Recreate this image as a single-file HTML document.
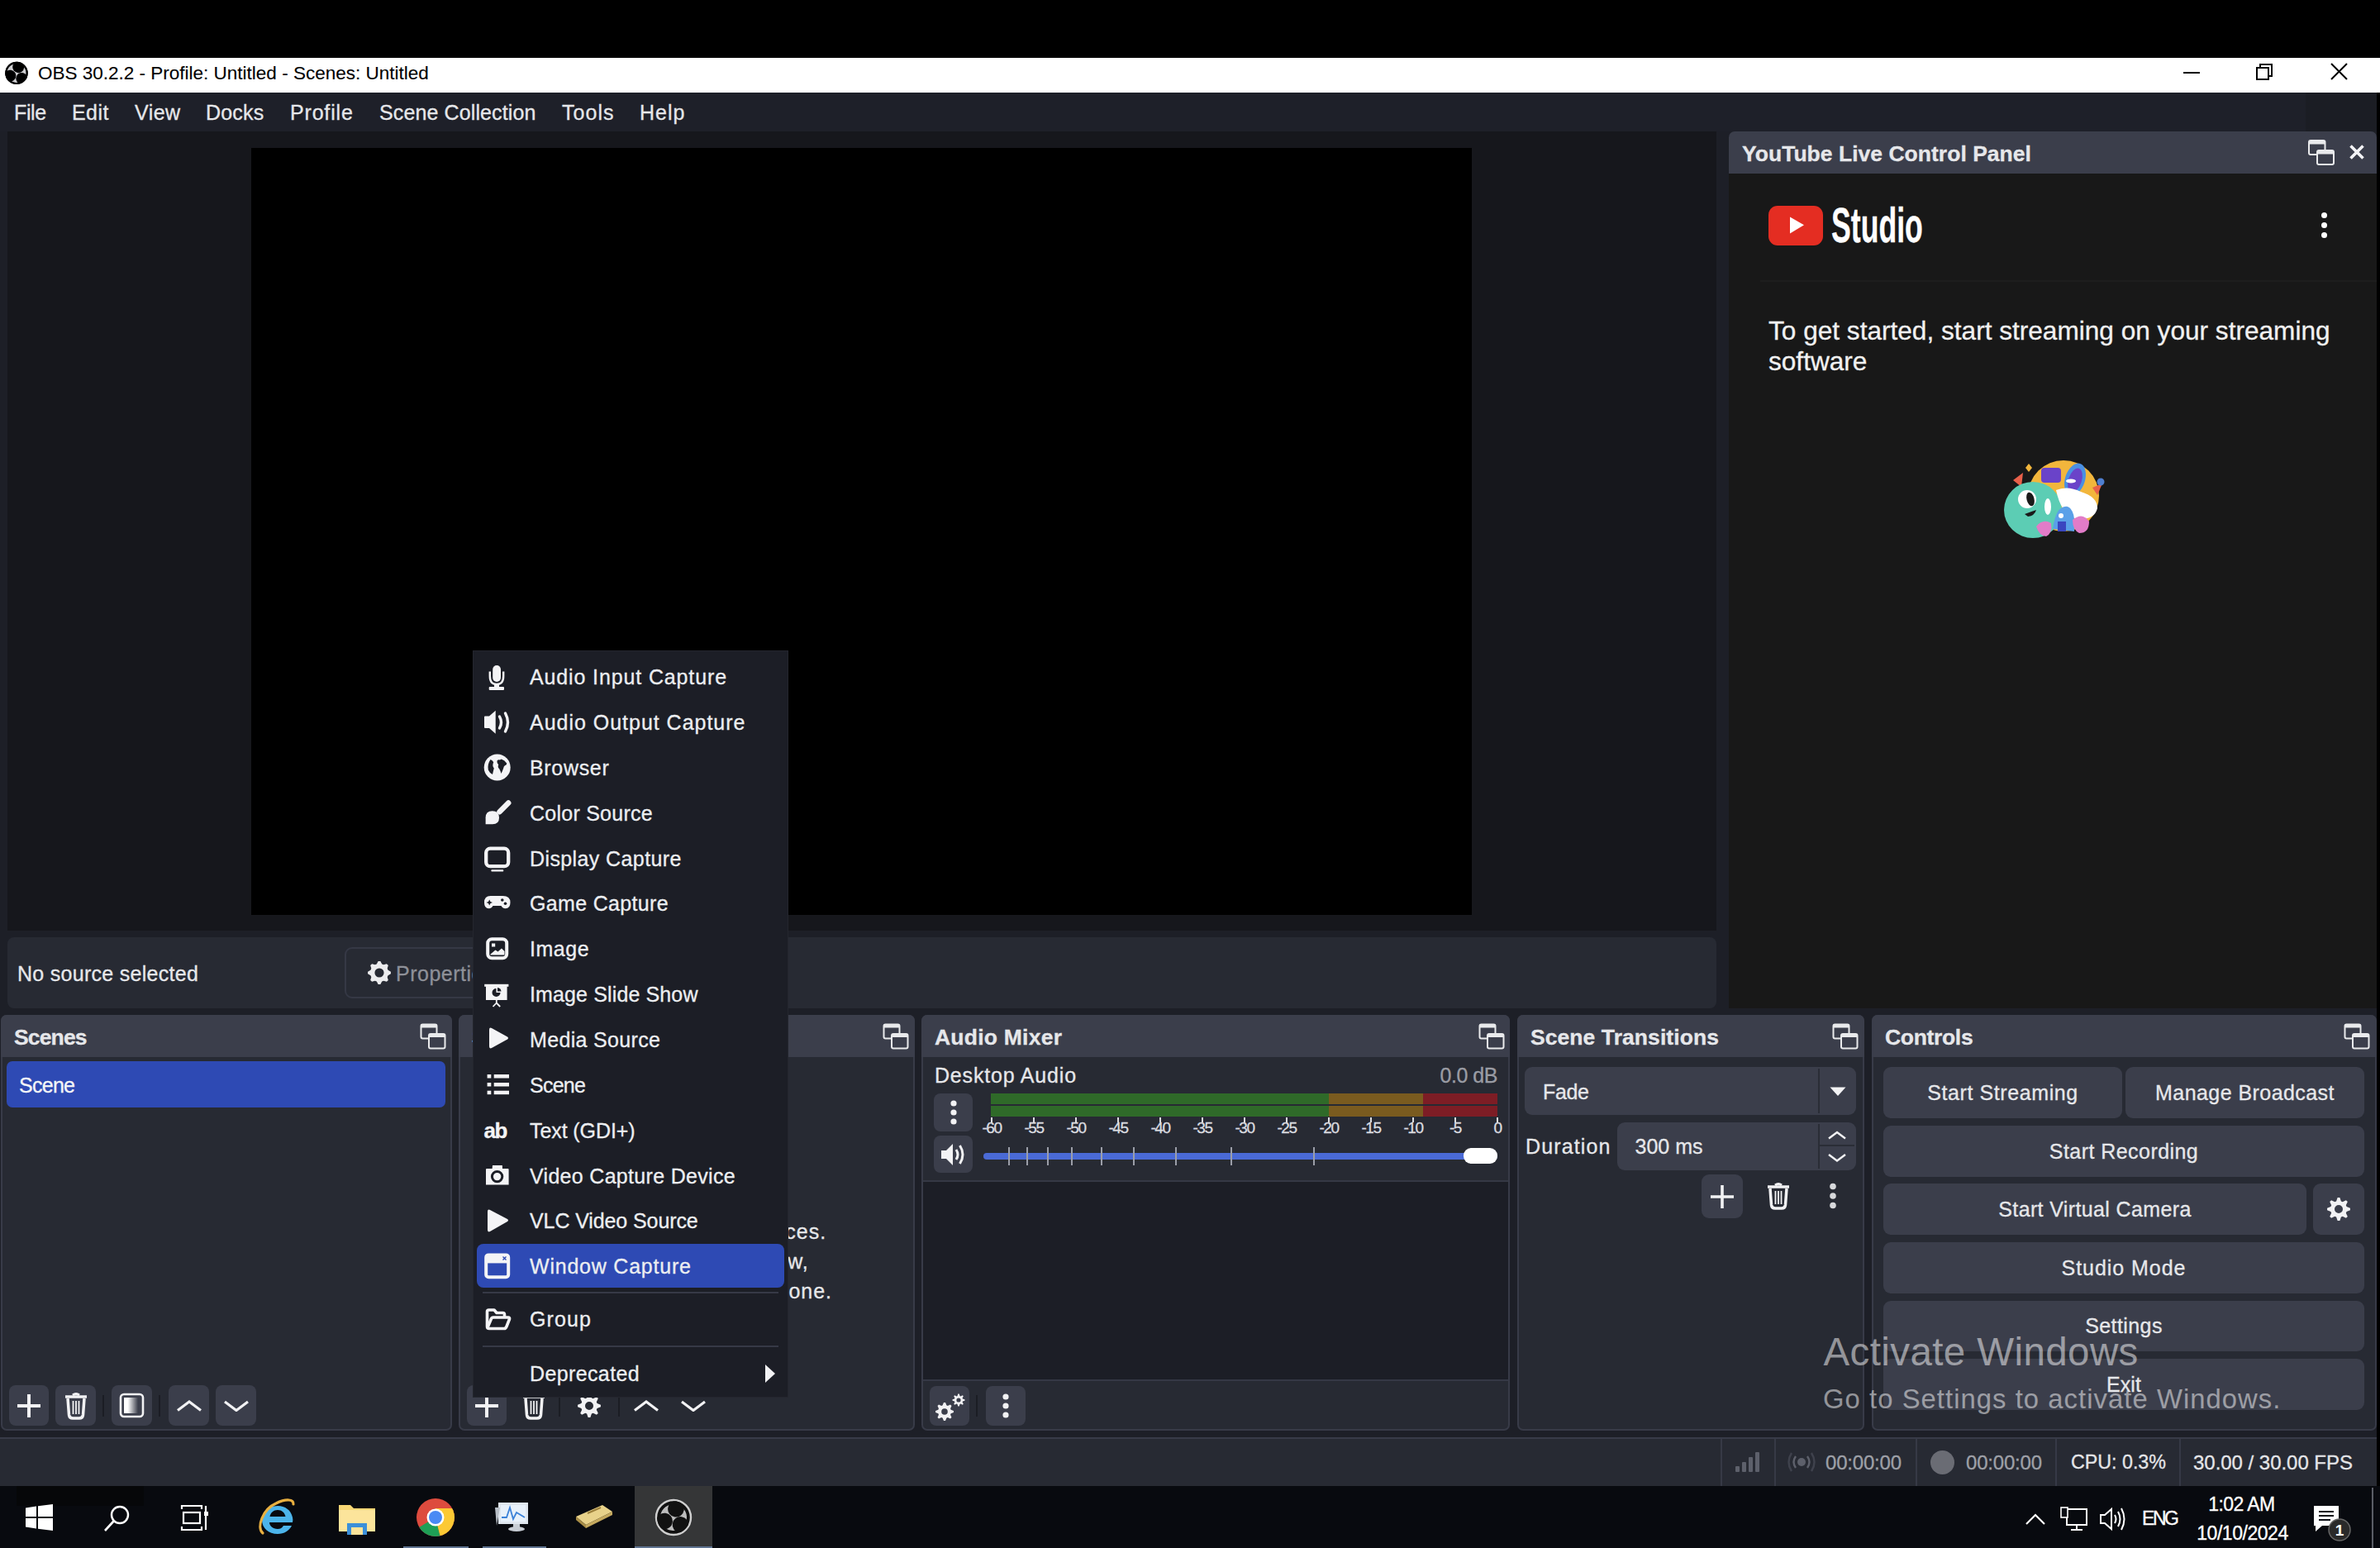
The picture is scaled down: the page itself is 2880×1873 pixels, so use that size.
<!DOCTYPE html>
<html><head><meta charset="utf-8"><title>OBS</title>
<style>
*{box-sizing:border-box;margin:0;padding:0}
html,body{width:2880px;height:1873px;overflow:hidden;background:#000;font-family:"Liberation Sans",sans-serif}
.a{position:absolute}
.t{line-height:1;white-space:nowrap;-webkit-text-stroke:0.3px currentColor}
</style></head><body>
<div class="a" style="left:0px;top:70px;width:2880px;height:42px;background:#ffffff;"></div>
<svg class="a" style="left:6px;top:74px;" width="28" height="29" viewBox="0 0 28 29"><defs><clipPath id="oc"><circle cx="14" cy="14.4" r="13.7"/></clipPath></defs><circle cx="14" cy="14.4" r="13.7" fill="#000"/><g transform="rotate(8 14 14.4)" clip-path="url(#oc)"><circle cx="14" cy="14.4" r="11.5" fill="#cfcfd2"/><circle cx="15.2" cy="6.9" r="7" fill="#000"/><circle cx="6.9" cy="18.8" r="7" fill="#000"/><circle cx="21.2" cy="20" r="7" fill="#000"/></g><circle cx="14" cy="14.4" r="12.8" fill="none" stroke="#000" stroke-width="1.8"/></svg>
<div class="a t" style="left:46px;top:78.45px;font-size:22.5px;color:#000;font-weight:400;-webkit-text-stroke:0.1px #000;">OBS 30.2.2 - Profile: Untitled - Scenes: Untitled</div>
<div class="a" style="left:2642px;top:87px;width:20px;height:2px;background:#000;"></div>
<svg class="a" style="left:2728px;top:74px;" width="26" height="26" viewBox="0 0 26 26"><rect x="3" y="8" width="14" height="14" fill="none" stroke="#000" stroke-width="2"/><path d="M7 8 V4 H21 V18 H17" fill="none" stroke="#000" stroke-width="2"/></svg>
<svg class="a" style="left:2818px;top:74px;" width="26" height="26" viewBox="0 0 26 26"><path d="M3 3 L22 22 M22 3 L3 22" stroke="#000" stroke-width="2"/></svg>
<div class="a" style="left:0px;top:112px;width:2876px;height:1686px;background:#1d1f27;"></div>
<div class="a" style="left:2876px;top:112px;width:4px;height:1686px;background:#000;"></div>
<div class="a" style="left:0px;top:112px;width:2876px;height:47px;background:#1e2029;"></div>
<div class="a" style="left:2790px;top:112px;width:86px;height:47px;background:#1b1d24;"></div>
<div class="a t" style="left:17px;top:123.84px;font-size:25px;color:#e6e7ea;font-weight:400;letter-spacing:-0.37px;">File</div>
<div class="a t" style="left:87px;top:123.84px;font-size:25px;color:#e6e7ea;font-weight:400;letter-spacing:0.44px;">Edit</div>
<div class="a t" style="left:163px;top:123.84px;font-size:25px;color:#e6e7ea;font-weight:400;letter-spacing:0.48px;">View</div>
<div class="a t" style="left:249px;top:123.84px;font-size:25px;color:#e6e7ea;font-weight:400;letter-spacing:0.18px;">Docks</div>
<div class="a t" style="left:351px;top:123.84px;font-size:25px;color:#e6e7ea;font-weight:400;letter-spacing:0.82px;">Profile</div>
<div class="a t" style="left:459px;top:123.84px;font-size:25px;color:#e6e7ea;font-weight:400;letter-spacing:0.12px;">Scene Collection</div>
<div class="a t" style="left:680px;top:123.84px;font-size:25px;color:#e6e7ea;font-weight:400;letter-spacing:1.03px;">Tools</div>
<div class="a t" style="left:774px;top:123.84px;font-size:25px;color:#e6e7ea;font-weight:400;letter-spacing:1.03px;">Help</div>
<div class="a" style="left:9px;top:159px;width:2068px;height:967px;background:#16171c;"></div>
<div class="a" style="left:304px;top:179px;width:1477px;height:928px;background:#000;"></div>
<div class="a" style="left:9px;top:1134px;width:2068px;height:86px;background:#272a33;border-radius:8px;"></div>
<div class="a t" style="left:21px;top:1165.84px;font-size:25px;color:#e6e7ea;font-weight:400;letter-spacing:0.29px;">No source selected</div>
<div class="a" style="left:417px;top:1146px;width:223px;height:62px;background:transparent;border:2px solid #353845;border-radius:9px;"></div>
<div class="a t" style="left:479px;top:1165.84px;font-size:25px;color:#8e9098;font-weight:400;letter-spacing:0.5px;">Properties</div>
<div class="a" style="left:2092px;top:159px;width:784px;height:51px;background:#3b3e4b;border-radius:7px 7px 0 0;"></div>
<div class="a t" style="left:2108px;top:172.57px;font-size:26.5px;color:#e6e7ea;font-weight:700;letter-spacing:0.02px;">YouTube Live Control Panel</div>
<div class="a" style="left:2092px;top:210px;width:784px;height:1010px;background:#181818;"></div>
<div class="a" style="left:2130px;top:339px;width:746px;height:2px;background:#1e1e1e;"></div>
<div class="a t" style="left:2140px;top:384.95px;font-size:31.6px;color:#f1f1f1;font-weight:400;">To get started, start streaming on your streaming</div>
<div class="a t" style="left:2140px;top:421.55px;font-size:31.6px;color:#f1f1f1;font-weight:400;">software</div>
<div class="a" style="left:1px;top:1228px;width:546px;height:503px;background:#272a33;border:2px solid #383b48;border-radius:7px;"></div>
<div class="a" style="left:1px;top:1228px;width:546px;height:51px;background:#3b3e4b;border-radius:7px 7px 0 0;"></div>
<div class="a t" style="left:17px;top:1241.57px;font-size:26.5px;color:#e6e7ea;font-weight:700;letter-spacing:-0.85px;">Scenes</div>
<div class="a" style="left:555px;top:1228px;width:552px;height:503px;background:#272a33;border:2px solid #383b48;border-radius:7px;"></div>
<div class="a" style="left:555px;top:1228px;width:552px;height:51px;background:#3b3e4b;border-radius:7px 7px 0 0;"></div>
<div class="a t" style="left:571px;top:1241.57px;font-size:26.5px;color:#e6e7ea;font-weight:700;">Sources</div>
<div class="a" style="left:1115px;top:1228px;width:712px;height:503px;background:#272a33;border:2px solid #383b48;border-radius:7px;"></div>
<div class="a" style="left:1115px;top:1228px;width:712px;height:51px;background:#3b3e4b;border-radius:7px 7px 0 0;"></div>
<div class="a t" style="left:1131px;top:1241.57px;font-size:26.5px;color:#e6e7ea;font-weight:700;letter-spacing:0.23px;">Audio Mixer</div>
<div class="a" style="left:1836px;top:1228px;width:420px;height:503px;background:#272a33;border:2px solid #383b48;border-radius:7px;"></div>
<div class="a" style="left:1836px;top:1228px;width:420px;height:51px;background:#3b3e4b;border-radius:7px 7px 0 0;"></div>
<div class="a t" style="left:1852px;top:1241.57px;font-size:26.5px;color:#e6e7ea;font-weight:700;letter-spacing:0.07px;">Scene Transitions</div>
<div class="a" style="left:2265px;top:1228px;width:611px;height:503px;background:#272a33;border:2px solid #383b48;border-radius:7px;"></div>
<div class="a" style="left:2265px;top:1228px;width:611px;height:51px;background:#3b3e4b;border-radius:7px 7px 0 0;"></div>
<div class="a t" style="left:2281px;top:1241.57px;font-size:26.5px;color:#e6e7ea;font-weight:700;letter-spacing:-0.33px;">Controls</div>
<div class="a" style="left:0px;top:1739px;width:2876px;height:59px;background:#272a33;"></div>
<div class="a" style="left:0px;top:1739px;width:2876px;height:2px;background:#383b48;"></div>
<div class="a" style="left:0px;top:1798px;width:2880px;height:75px;background:#080a0f;"></div>
<svg class="a" style="left:508px;top:1238px;" width="32" height="32" viewBox="0 0 32 32"><rect x="1.5" y="1.5" width="19" height="17" rx="2" fill="none" stroke="#e9eaec" stroke-width="2"/><rect x="1.5" y="1.5" width="19" height="4" fill="#e9eaec"/><rect x="11" y="13" width="19.5" height="17.5" rx="2" fill="#3b3e4b" stroke="#e9eaec" stroke-width="2"/><rect x="11" y="13" width="19.5" height="4" fill="#e9eaec"/></svg>
<svg class="a" style="left:1068px;top:1238px;" width="32" height="32" viewBox="0 0 32 32"><rect x="1.5" y="1.5" width="19" height="17" rx="2" fill="none" stroke="#e9eaec" stroke-width="2"/><rect x="1.5" y="1.5" width="19" height="4" fill="#e9eaec"/><rect x="11" y="13" width="19.5" height="17.5" rx="2" fill="#3b3e4b" stroke="#e9eaec" stroke-width="2"/><rect x="11" y="13" width="19.5" height="4" fill="#e9eaec"/></svg>
<svg class="a" style="left:1789px;top:1238px;" width="32" height="32" viewBox="0 0 32 32"><rect x="1.5" y="1.5" width="19" height="17" rx="2" fill="none" stroke="#e9eaec" stroke-width="2"/><rect x="1.5" y="1.5" width="19" height="4" fill="#e9eaec"/><rect x="11" y="13" width="19.5" height="17.5" rx="2" fill="#3b3e4b" stroke="#e9eaec" stroke-width="2"/><rect x="11" y="13" width="19.5" height="4" fill="#e9eaec"/></svg>
<svg class="a" style="left:2217px;top:1238px;" width="32" height="32" viewBox="0 0 32 32"><rect x="1.5" y="1.5" width="19" height="17" rx="2" fill="none" stroke="#e9eaec" stroke-width="2"/><rect x="1.5" y="1.5" width="19" height="4" fill="#e9eaec"/><rect x="11" y="13" width="19.5" height="17.5" rx="2" fill="#3b3e4b" stroke="#e9eaec" stroke-width="2"/><rect x="11" y="13" width="19.5" height="4" fill="#e9eaec"/></svg>
<svg class="a" style="left:2836px;top:1238px;" width="32" height="32" viewBox="0 0 32 32"><rect x="1.5" y="1.5" width="19" height="17" rx="2" fill="none" stroke="#e9eaec" stroke-width="2"/><rect x="1.5" y="1.5" width="19" height="4" fill="#e9eaec"/><rect x="11" y="13" width="19.5" height="17.5" rx="2" fill="#3b3e4b" stroke="#e9eaec" stroke-width="2"/><rect x="11" y="13" width="19.5" height="4" fill="#e9eaec"/></svg>
<div class="a" style="left:8px;top:1284px;width:531px;height:56px;background:#2e4ab4;border-radius:7px;"></div>
<div class="a t" style="left:23px;top:1300.84px;font-size:25px;color:#f4f5f7;font-weight:400;letter-spacing:-0.72px;">Scene</div>
<div class="a" style="left:11px;top:1676px;width:48px;height:49px;background:#3b3e4b;border-radius:8px;"></div>
<svg class="a" style="left:19px;top:1685px;" width="32" height="32" viewBox="0 0 32 32"><path d="M16 2 V30 M2 16 H30" stroke="#f2f2f4" stroke-width="4"/></svg>
<div class="a" style="left:67px;top:1676px;width:49px;height:49px;background:#3b3e4b;border-radius:8px;"></div>
<svg class="a" style="left:76.5px;top:1684px;" width="30" height="34" viewBox="0 0 30 34"><path d="M2 6 H28" stroke="#f2f2f4" stroke-width="3.5"/><path d="M11 4 Q15 1 19 4" fill="none" stroke="#f2f2f4" stroke-width="3"/><path d="M5 8 L6.5 28 Q7 32 11 32 H19 Q23 32 23.5 28 L25 8" fill="none" stroke="#f2f2f4" stroke-width="3.5"/><path d="M11.5 11 V27 M15 11 V27 M18.5 11 V27" stroke="#f2f2f4" stroke-width="1.8"/></svg>
<div class="a" style="left:124px;top:1688px;width:2px;height:26px;background:#1b1d24;"></div>
<div class="a" style="left:135px;top:1676px;width:49px;height:49px;background:#3b3e4b;border-radius:8px;"></div>
<svg class="a" style="left:144px;top:1684px;" width="32" height="34" viewBox="0 0 32 34"><defs><linearGradient id="gf" x1="0" x2="1"><stop offset="0.25" stop-color="#fff"/><stop offset="0.9" stop-color="#fff" stop-opacity="0"/></linearGradient></defs><rect x="2" y="3" width="27" height="27" rx="4" fill="none" stroke="#f2f2f4" stroke-width="2.6"/><rect x="6" y="7" width="19" height="19" fill="url(#gf)"/></svg>
<div class="a" style="left:192px;top:1688px;width:2px;height:26px;background:#1b1d24;"></div>
<div class="a" style="left:204px;top:1676px;width:49px;height:49px;background:#3b3e4b;border-radius:8px;"></div>
<svg class="a" style="left:212.5px;top:1693.75px;" width="32" height="14.5" viewBox="0 0 32 14.5"><path d="M2 12.5 L16 2 L30 12.5" fill="none" stroke="#f2f2f4" stroke-width="3.2"/></svg>
<div class="a" style="left:261px;top:1676px;width:49px;height:49px;background:#3b3e4b;border-radius:8px;"></div>
<svg class="a" style="left:269.5px;top:1693.75px;" width="32" height="14.5" viewBox="0 0 32 14.5"><path d="M2 2 L16 12.5 L30 2" fill="none" stroke="#f2f2f4" stroke-width="3.2"/></svg>
<div class="a t" style="left:831px;top:1478.34px;font-size:25px;color:#e6e7ea;font-weight:400;letter-spacing:0.95px;transform:translateX(-50%);">You don't have any sources.</div>
<div class="a t" style="left:831px;top:1513.84px;font-size:25px;color:#e6e7ea;font-weight:400;letter-spacing:0.95px;transform:translateX(-50%);">Click the + button below,</div>
<div class="a t" style="left:831px;top:1549.84px;font-size:25px;color:#e6e7ea;font-weight:400;letter-spacing:0.95px;transform:translateX(-50%);">or right click here to add one.</div>
<div class="a" style="left:565px;top:1676px;width:48px;height:49px;background:#3b3e4b;border-radius:8px;"></div>
<svg class="a" style="left:573px;top:1685px;" width="32" height="32" viewBox="0 0 32 32"><path d="M16 2 V30 M2 16 H30" stroke="#f2f2f4" stroke-width="4"/></svg>
<svg class="a" style="left:631px;top:1684px;" width="30" height="34" viewBox="0 0 30 34"><path d="M2 6 H28" stroke="#f2f2f4" stroke-width="3.5"/><path d="M11 4 Q15 1 19 4" fill="none" stroke="#f2f2f4" stroke-width="3"/><path d="M5 8 L6.5 28 Q7 32 11 32 H19 Q23 32 23.5 28 L25 8" fill="none" stroke="#f2f2f4" stroke-width="3.5"/><path d="M11.5 11 V27 M15 11 V27 M18.5 11 V27" stroke="#f2f2f4" stroke-width="1.8"/></svg>
<div class="a" style="left:676px;top:1688px;width:2px;height:26px;background:#1b1d24;"></div>
<svg class="a" style="left:697px;top:1685px;" width="32" height="32" viewBox="0 0 32 32"><path fill-rule="evenodd" d="M14.63 2.07 L17.37 2.07 L18.90 6.43 L20.71 7.18 L24.88 5.18 L26.82 7.12 L24.82 11.29 L25.57 13.10 L29.93 14.63 L29.93 17.37 L25.57 18.90 L24.82 20.71 L26.82 24.88 L24.88 26.82 L20.71 24.82 L18.90 25.57 L17.37 29.93 L14.63 29.93 L13.10 25.57 L11.29 24.82 L7.12 26.82 L5.18 24.88 L7.18 20.71 L6.43 18.90 L2.07 17.37 L2.07 14.63 L6.43 13.10 L7.18 11.29 L5.18 7.12 L7.12 5.18 L11.29 7.18 L13.10 6.43 Z M21 16 A5 5 0 1 0 11 16 A5 5 0 1 0 21 16 Z" fill="#f2f2f4"/></svg>
<div class="a" style="left:748px;top:1688px;width:2px;height:26px;background:#1b1d24;"></div>
<svg class="a" style="left:766px;top:1693.75px;" width="32" height="14.5" viewBox="0 0 32 14.5"><path d="M2 12.5 L16 2 L30 12.5" fill="none" stroke="#f2f2f4" stroke-width="3.2"/></svg>
<svg class="a" style="left:822.5px;top:1693.75px;" width="32" height="14.5" viewBox="0 0 32 14.5"><path d="M2 2 L16 12.5 L30 2" fill="none" stroke="#f2f2f4" stroke-width="3.2"/></svg>
<div class="a" style="left:1117px;top:1279px;width:708px;height:150px;background:#272a33;"></div>
<div class="a" style="left:1117px;top:1428px;width:708px;height:2px;background:#353845;"></div>
<div class="a" style="left:1117px;top:1430px;width:708px;height:239px;background:#1c1e26;"></div>
<div class="a" style="left:1117px;top:1669px;width:708px;height:2px;background:#353845;"></div>
<div class="a t" style="left:1131px;top:1288.84px;font-size:25px;color:#e6e7ea;font-weight:400;letter-spacing:0.82px;">Desktop Audio</div>
<div class="a t" style="left:1812px;top:1288.84px;font-size:25px;color:#9a9ca4;font-weight:400;letter-spacing:-0.46px;transform:translateX(-100%);">0.0 dB</div>
<div class="a" style="left:1130px;top:1323px;width:47px;height:46px;background:#3b3e4b;border-radius:8px;"></div>
<svg class="a" style="left:1147.5px;top:1330px;" width="12" height="32" viewBox="0 0 12 32"><circle cx="6" cy="5" r="3.6" fill="#f2f2f4"/><circle cx="6" cy="16" r="3.6" fill="#f2f2f4"/><circle cx="6" cy="27" r="3.6" fill="#f2f2f4"/></svg>
<div class="a" style="left:1130px;top:1374px;width:47px;height:45px;background:#3b3e4b;border-radius:8px;"></div>
<svg class="a" style="left:1137px;top:1381px;" width="34" height="32" viewBox="0 0 34 32"><path d="M2 11 H8 L16 3 V29 L8 21 H2 Z" fill="#f2f2f4"/><path d="M20 10 Q24 16 20 22" fill="none" stroke="#f2f2f4" stroke-width="3"/><path d="M24.5 5 Q31.5 16 24.5 27" fill="none" stroke="#f2f2f4" stroke-width="3"/></svg>
<div class="a" style="left:1199px;top:1323px;width:409px;height:13px;background:#2f6a29;"></div>
<div class="a" style="left:1608px;top:1323px;width:114px;height:13px;background:#7a5b1f;"></div>
<div class="a" style="left:1722px;top:1323px;width:90px;height:13px;background:#7d1d25;"></div>
<div class="a" style="left:1199px;top:1338px;width:409px;height:13px;background:#2f6a29;"></div>
<div class="a" style="left:1608px;top:1338px;width:114px;height:13px;background:#7a5b1f;"></div>
<div class="a" style="left:1722px;top:1338px;width:90px;height:13px;background:#7d1d25;"></div>
<div class="a" style="left:1199px;top:1352px;width:2px;height:6px;background:#dcdde0;"></div>
<div class="a t" style="left:1200.0px;top:1354.92px;font-size:19px;color:#dcdde0;font-weight:400;transform:translateX(-50%);letter-spacing:-1.5px;">-60</div>
<div class="a" style="left:1250px;top:1352px;width:2px;height:6px;background:#dcdde0;"></div>
<div class="a t" style="left:1251.0px;top:1354.92px;font-size:19px;color:#dcdde0;font-weight:400;transform:translateX(-50%);letter-spacing:-1.5px;">-55</div>
<div class="a" style="left:1301px;top:1352px;width:2px;height:6px;background:#dcdde0;"></div>
<div class="a t" style="left:1302.0px;top:1354.92px;font-size:19px;color:#dcdde0;font-weight:400;transform:translateX(-50%);letter-spacing:-1.5px;">-50</div>
<div class="a" style="left:1352px;top:1352px;width:2px;height:6px;background:#dcdde0;"></div>
<div class="a t" style="left:1353.0px;top:1354.92px;font-size:19px;color:#dcdde0;font-weight:400;transform:translateX(-50%);letter-spacing:-1.5px;">-45</div>
<div class="a" style="left:1403px;top:1352px;width:2px;height:6px;background:#dcdde0;"></div>
<div class="a t" style="left:1404.0px;top:1354.92px;font-size:19px;color:#dcdde0;font-weight:400;transform:translateX(-50%);letter-spacing:-1.5px;">-40</div>
<div class="a" style="left:1454px;top:1352px;width:2px;height:6px;background:#dcdde0;"></div>
<div class="a t" style="left:1455.0px;top:1354.92px;font-size:19px;color:#dcdde0;font-weight:400;transform:translateX(-50%);letter-spacing:-1.5px;">-35</div>
<div class="a" style="left:1505px;top:1352px;width:2px;height:6px;background:#dcdde0;"></div>
<div class="a t" style="left:1506.0px;top:1354.92px;font-size:19px;color:#dcdde0;font-weight:400;transform:translateX(-50%);letter-spacing:-1.5px;">-30</div>
<div class="a" style="left:1556px;top:1352px;width:2px;height:6px;background:#dcdde0;"></div>
<div class="a t" style="left:1557.0px;top:1354.92px;font-size:19px;color:#dcdde0;font-weight:400;transform:translateX(-50%);letter-spacing:-1.5px;">-25</div>
<div class="a" style="left:1607px;top:1352px;width:2px;height:6px;background:#dcdde0;"></div>
<div class="a t" style="left:1608.0px;top:1354.92px;font-size:19px;color:#dcdde0;font-weight:400;transform:translateX(-50%);letter-spacing:-1.5px;">-20</div>
<div class="a" style="left:1658px;top:1352px;width:2px;height:6px;background:#dcdde0;"></div>
<div class="a t" style="left:1659.0px;top:1354.92px;font-size:19px;color:#dcdde0;font-weight:400;transform:translateX(-50%);letter-spacing:-1.5px;">-15</div>
<div class="a" style="left:1709px;top:1352px;width:2px;height:6px;background:#dcdde0;"></div>
<div class="a t" style="left:1710.0px;top:1354.92px;font-size:19px;color:#dcdde0;font-weight:400;transform:translateX(-50%);letter-spacing:-1.5px;">-10</div>
<div class="a" style="left:1760px;top:1352px;width:2px;height:6px;background:#dcdde0;"></div>
<div class="a t" style="left:1761.0px;top:1354.92px;font-size:19px;color:#dcdde0;font-weight:400;transform:translateX(-50%);letter-spacing:-1.5px;">-5</div>
<div class="a" style="left:1811px;top:1352px;width:2px;height:6px;background:#dcdde0;"></div>
<div class="a t" style="left:1812.0px;top:1354.92px;font-size:19px;color:#dcdde0;font-weight:400;transform:translateX(-50%);letter-spacing:-1.5px;">0</div>
<div class="a" style="left:1190px;top:1395px;width:622px;height:8px;background:#4a6ad6;border-radius:4px;"></div>
<div class="a" style="left:1220px;top:1388px;width:2px;height:22px;background:#9b9ea8;"></div>
<div class="a" style="left:1242px;top:1388px;width:2px;height:22px;background:#9b9ea8;"></div>
<div class="a" style="left:1267px;top:1388px;width:2px;height:22px;background:#9b9ea8;"></div>
<div class="a" style="left:1296px;top:1388px;width:2px;height:22px;background:#9b9ea8;"></div>
<div class="a" style="left:1332px;top:1388px;width:2px;height:22px;background:#9b9ea8;"></div>
<div class="a" style="left:1371px;top:1388px;width:2px;height:22px;background:#9b9ea8;"></div>
<div class="a" style="left:1422px;top:1388px;width:2px;height:22px;background:#9b9ea8;"></div>
<div class="a" style="left:1489px;top:1388px;width:2px;height:22px;background:#9b9ea8;"></div>
<div class="a" style="left:1589px;top:1388px;width:2px;height:22px;background:#9b9ea8;"></div>
<div class="a" style="left:1771px;top:1389px;width:41px;height:19px;background:#ffffff;border-radius:9px;"></div>
<div class="a" style="left:1125px;top:1677px;width:48px;height:48px;background:#3b3e4b;border-radius:8px;"></div>
<svg class="a" style="left:1129px;top:1684px;" width="42" height="38" viewBox="0 0 42 38"><path fill-rule="evenodd" d="M12.92 13.05 L15.08 13.05 L16.32 16.34 L17.77 16.94 L20.98 15.50 L22.50 17.02 L21.06 20.23 L21.66 21.68 L24.95 22.92 L24.95 25.08 L21.66 26.32 L21.06 27.77 L22.50 30.98 L20.98 32.50 L17.77 31.06 L16.32 31.66 L15.08 34.95 L12.92 34.95 L11.68 31.66 L10.23 31.06 L7.02 32.50 L5.50 30.98 L6.94 27.77 L6.34 26.32 L3.05 25.08 L3.05 22.92 L6.34 21.68 L6.94 20.23 L5.50 17.02 L7.02 15.50 L10.23 16.94 L11.68 16.34 Z M17.8 24 A3.8 3.8 0 1 0 10.2 24 A3.8 3.8 0 1 0 17.8 24 Z" fill="#f2f2f4"/><path fill-rule="evenodd" d="M30.26 2.54 L31.74 2.54 L32.51 5.02 L33.45 5.41 L35.76 4.20 L36.80 5.24 L35.59 7.55 L35.98 8.49 L38.46 9.26 L38.46 10.74 L35.98 11.51 L35.59 12.45 L36.80 14.76 L35.76 15.80 L33.45 14.59 L32.51 14.98 L31.74 17.46 L30.26 17.46 L29.49 14.98 L28.55 14.59 L26.24 15.80 L25.20 14.76 L26.41 12.45 L26.02 11.51 L23.54 10.74 L23.54 9.26 L26.02 8.49 L26.41 7.55 L25.20 5.24 L26.24 4.20 L28.55 5.41 L29.49 5.02 Z M33.6 10 A2.6 2.6 0 1 0 28.4 10 A2.6 2.6 0 1 0 33.6 10 Z" fill="#f2f2f4"/></svg>
<div class="a" style="left:1181px;top:1688px;width:2px;height:26px;background:#1b1d24;"></div>
<div class="a" style="left:1193px;top:1677px;width:48px;height:48px;background:#3b3e4b;border-radius:8px;"></div>
<svg class="a" style="left:1211px;top:1685px;" width="12" height="32" viewBox="0 0 12 32"><circle cx="6" cy="5" r="3.6" fill="#f2f2f4"/><circle cx="6" cy="16" r="3.6" fill="#f2f2f4"/><circle cx="6" cy="27" r="3.6" fill="#f2f2f4"/></svg>
<div class="a" style="left:1845px;top:1291px;width:401px;height:58px;background:#3b3e4b;border-radius:9px;"></div>
<div class="a" style="left:2200px;top:1293px;width:2px;height:54px;background:#2a2d36;"></div>
<div class="a t" style="left:1867px;top:1308.84px;font-size:25px;color:#e6e7ea;font-weight:400;letter-spacing:-0.33px;">Fade</div>
<svg class="a" style="left:2214px;top:1315px;" width="20" height="12" viewBox="0 0 20 12"><path d="M0.5 0.5 H19.5 L10 11 Z" fill="#f2f2f4"/></svg>
<div class="a t" style="left:1846px;top:1374.84px;font-size:25px;color:#e6e7ea;font-weight:400;letter-spacing:1.14px;">Duration</div>
<div class="a" style="left:1957px;top:1358px;width:289px;height:58px;background:#3b3e4b;border-radius:9px;"></div>
<div class="a" style="left:2200px;top:1360px;width:2px;height:54px;background:#2a2d36;"></div>
<div class="a" style="left:2202px;top:1385px;width:42px;height:2px;background:#2a2d36;"></div>
<div class="a t" style="left:1978.5px;top:1374.84px;font-size:25px;color:#e6e7ea;font-weight:400;">300 ms</div>
<svg class="a" style="left:2211px;top:1367.75px;" width="24" height="11.5" viewBox="0 0 24 11.5"><path d="M2 9.5 L12 2 L22 9.5" fill="none" stroke="#f2f2f4" stroke-width="2.4"/></svg>
<svg class="a" style="left:2211px;top:1394.75px;" width="24" height="11.5" viewBox="0 0 24 11.5"><path d="M2 2 L12 9.5 L22 2" fill="none" stroke="#f2f2f4" stroke-width="2.4"/></svg>
<div class="a" style="left:2059px;top:1421px;width:50px;height:53px;background:#3b3e4b;border-radius:9px;"></div>
<svg class="a" style="left:2068px;top:1431.5px;" width="32" height="32" viewBox="0 0 32 32"><path d="M16 2 V30 M2 16 H30" stroke="#f2f2f4" stroke-width="3.6"/></svg>
<svg class="a" style="left:2137px;top:1430px;" width="30" height="34" viewBox="0 0 30 34"><path d="M2 6 H28" stroke="#f2f2f4" stroke-width="3.5"/><path d="M11 4 Q15 1 19 4" fill="none" stroke="#f2f2f4" stroke-width="3"/><path d="M5 8 L6.5 28 Q7 32 11 32 H19 Q23 32 23.5 28 L25 8" fill="none" stroke="#f2f2f4" stroke-width="3.5"/><path d="M11.5 11 V27 M15 11 V27 M18.5 11 V27" stroke="#f2f2f4" stroke-width="1.8"/></svg>
<svg class="a" style="left:2211.5px;top:1431px;" width="12" height="32" viewBox="0 0 12 32"><circle cx="6" cy="4.5" r="3.8" fill="#d8d9dc"/><circle cx="6" cy="16" r="3.8" fill="#d8d9dc"/><circle cx="6" cy="27.5" r="3.8" fill="#d8d9dc"/></svg>
<div class="a" style="left:2279px;top:1291px;width:289px;height:62px;background:#3b3e4b;border-radius:9px;"></div>
<div class="a t" style="left:2423.5px;top:1309.84px;font-size:25px;color:#e6e7ea;font-weight:400;letter-spacing:0.59px;transform:translateX(-50%);">Start Streaming</div>
<div class="a" style="left:2572px;top:1291px;width:289px;height:62px;background:#3b3e4b;border-radius:9px;"></div>
<div class="a t" style="left:2716.5px;top:1309.84px;font-size:25px;color:#e6e7ea;font-weight:400;letter-spacing:0.44px;transform:translateX(-50%);">Manage Broadcast</div>
<div class="a" style="left:2279px;top:1362px;width:582px;height:62px;background:#3b3e4b;border-radius:9px;"></div>
<div class="a t" style="left:2570.0px;top:1380.84px;font-size:25px;color:#e6e7ea;font-weight:400;letter-spacing:0.45px;transform:translateX(-50%);">Start Recording</div>
<div class="a" style="left:2279px;top:1432px;width:512px;height:62px;background:#3b3e4b;border-radius:9px;"></div>
<div class="a t" style="left:2535.0px;top:1450.84px;font-size:25px;color:#e6e7ea;font-weight:400;letter-spacing:0.37px;transform:translateX(-50%);">Start Virtual Camera</div>
<div class="a" style="left:2799px;top:1432px;width:62px;height:62px;background:#3b3e4b;border-radius:9px;"></div>
<svg class="a" style="left:2814px;top:1447px;" width="32" height="32" viewBox="0 0 32 32"><path fill-rule="evenodd" d="M14.63 2.07 L17.37 2.07 L18.90 6.43 L20.71 7.18 L24.88 5.18 L26.82 7.12 L24.82 11.29 L25.57 13.10 L29.93 14.63 L29.93 17.37 L25.57 18.90 L24.82 20.71 L26.82 24.88 L24.88 26.82 L20.71 24.82 L18.90 25.57 L17.37 29.93 L14.63 29.93 L13.10 25.57 L11.29 24.82 L7.12 26.82 L5.18 24.88 L7.18 20.71 L6.43 18.90 L2.07 17.37 L2.07 14.63 L6.43 13.10 L7.18 11.29 L5.18 7.12 L7.12 5.18 L11.29 7.18 L13.10 6.43 Z M21 16 A5 5 0 1 0 11 16 A5 5 0 1 0 21 16 Z" fill="#f2f2f4"/></svg>
<div class="a" style="left:2279px;top:1503px;width:582px;height:62px;background:#3b3e4b;border-radius:9px;"></div>
<div class="a t" style="left:2570.0px;top:1521.84px;font-size:25px;color:#e6e7ea;font-weight:400;letter-spacing:0.96px;transform:translateX(-50%);">Studio Mode</div>
<div class="a" style="left:2279px;top:1574px;width:582px;height:61px;background:#3b3e4b;border-radius:9px;"></div>
<div class="a t" style="left:2570.0px;top:1592.34px;font-size:25px;color:#e6e7ea;font-weight:400;letter-spacing:0.42px;transform:translateX(-50%);">Settings</div>
<div class="a" style="left:2279px;top:1644px;width:582px;height:62px;background:#3b3e4b;border-radius:9px;"></div>
<div class="a t" style="left:2570.0px;top:1662.84px;font-size:25px;color:#e6e7ea;font-weight:400;letter-spacing:0.1px;transform:translateX(-50%);">Exit</div>
<div class="a" style="left:2082px;top:1741px;width:2px;height:57px;background:#363946;"></div>
<div class="a" style="left:2147px;top:1741px;width:2px;height:57px;background:#363946;"></div>
<div class="a" style="left:2318px;top:1741px;width:2px;height:57px;background:#363946;"></div>
<div class="a" style="left:2487px;top:1741px;width:2px;height:57px;background:#363946;"></div>
<div class="a" style="left:2637px;top:1741px;width:2px;height:57px;background:#363946;"></div>
<svg class="a" style="left:2099px;top:1756px;" width="34" height="26" viewBox="0 0 34 26"><rect x="1" y="18" width="5" height="7" rx="1" fill="#5d606b"/><rect x="9" y="13" width="5" height="12" rx="1" fill="#5d606b"/><rect x="17" y="7" width="5" height="18" rx="1" fill="#5d606b"/><rect x="25" y="1" width="5" height="24" rx="1" fill="#5d606b"/></svg>
<svg class="a" style="left:2163px;top:1755px;" width="34" height="28" viewBox="0 0 34 28"><circle cx="17" cy="14" r="5" fill="#5d606b"/><path d="M10 7 Q5 14 10 21 M24 7 Q29 14 24 21" fill="none" stroke="#5d606b" stroke-width="2.4"/><path d="M5 3 Q-2 14 5 25 M29 3 Q36 14 29 25" fill="none" stroke="#3f424d" stroke-width="2.4"/></svg>
<div class="a t" style="left:2209px;top:1757.68px;font-size:24px;color:#9ea0a7;font-weight:400;letter-spacing:-0.2px;">00:00:00</div>
<div class="a" style="left:2336px;top:1755px;width:29px;height:29px;background:#6a6c74;border-radius:50%;"></div>
<div class="a t" style="left:2379px;top:1757.68px;font-size:24px;color:#9ea0a7;font-weight:400;letter-spacing:-0.2px;">00:00:00</div>
<div class="a t" style="left:2506px;top:1758.28px;font-size:23.3px;color:#e4e5e8;font-weight:400;letter-spacing:-0.03px;">CPU: 0.3%</div>
<div class="a t" style="left:2654px;top:1757.68px;font-size:24px;color:#e4e5e8;font-weight:400;letter-spacing:-0.03px;">30.00 / 30.00 FPS</div>
<div class="a" style="left:20px;top:1798px;width:154px;height:24px;background:#060709;"></div>
<div class="a" style="left:768px;top:1798px;width:94px;height:75px;background:#353637;"></div>
<div class="a" style="left:488px;top:1871px;width:79px;height:2px;background:#5f7390;"></div>
<div class="a" style="left:584px;top:1871px;width:77px;height:2px;background:#5f7390;"></div>
<div class="a" style="left:768px;top:1871px;width:94px;height:2px;background:#5f7390;"></div>
<svg class="a" style="left:31px;top:1820px;" width="34" height="32" viewBox="0 0 34 32"><path d="M0 4.5 L13 2.5 V15 H0 Z M15 2.2 L33 0 V15 H15 Z M0 17 H13 V29.5 L0 27.5 Z M15 17 H33 V32 L15 29.8 Z" fill="#fff"/></svg>
<svg class="a" style="left:124px;top:1819px;" width="36" height="36" viewBox="0 0 36 36"><circle cx="21" cy="14" r="10" fill="none" stroke="#fff" stroke-width="2.4"/><path d="M14 21 L3 33" stroke="#fff" stroke-width="2.6"/></svg>
<svg class="a" style="left:216px;top:1818px;" width="38" height="36" viewBox="0 0 38 36"><rect x="6" y="12" width="20" height="13" fill="none" stroke="#fff" stroke-width="2.2"/><path d="M4 8 V4 H28 V8 M4 29 V33 H28 V29" fill="none" stroke="#fff" stroke-width="2.2"/><path d="M33 4 V33" stroke="#fff" stroke-width="2.2"/><rect x="31" y="11" width="5" height="5" fill="#fff"/></svg>
<svg class="a" style="left:308px;top:1810px;" width="54" height="50" viewBox="0 0 54 50"><path d="M28 12 C15 12 9 21 9 29 C9 39 17 46 28 46 C36 46 42 42 45 36 H35 C33 39 31 40 28 40 C22 40 18 36 18 32 H46 C46.5 30 46.5 28 46 26 C44 17 37 12 28 12 Z M18.5 25 C19.5 20 23 17 28 17 C33 17 36.5 20 37.5 25 Z" fill="#4cb4ea"/><path d="M10 45 C2 38 10 16 26 9 C38 3 48 4 47 10" fill="none" stroke="#e9b040" stroke-width="3.2" stroke-linecap="round"/></svg>
<svg class="a" style="left:408px;top:1815px;" width="48" height="42" viewBox="0 0 48 42"><path d="M2 6 H16 L20 10 H46 V38 H2 Z" fill="#f8d775"/><rect x="2" y="12" width="44" height="26" fill="#fce49b"/><rect x="12" y="28" width="24" height="14" fill="#3b8fd9"/><rect x="17" y="33" width="14" height="9" fill="#fce49b"/></svg>
<svg class="a" style="left:503px;top:1812px;" width="48" height="48" viewBox="0 0 48 48"><defs><clipPath id="cc"><circle cx="24" cy="24" r="23"/></clipPath></defs><g clip-path="url(#cc)"><rect width="48" height="48" fill="#dd4b3e"/><path d="M24 24 L4 36 L2 48 H30 Z" fill="#1e9f56"/><path d="M24 24 L30 48 H48 V13 H24 Z" fill="#fcc934"/></g><circle cx="24" cy="24" r="10.5" fill="#fff"/><circle cx="24" cy="24" r="8" fill="#4a8af4"/></svg>
<svg class="a" style="left:597px;top:1814px;" width="48" height="42" viewBox="0 0 48 42"><rect x="6" y="4" width="36" height="26" fill="#dfe6ee"/><rect x="9" y="7" width="30" height="20" fill="#e8f1fa"/><path d="M10 22 L16 22 L20 10 L24 24 L28 16 L38 22" fill="none" stroke="#3c82d8" stroke-width="1.8"/><path d="M4 32 L2 10 H8" fill="#b7bec6"/><ellipse cx="28" cy="36" rx="10" ry="3" fill="#c7cdd4"/><rect x="24" y="30" width="8" height="5" fill="#c7cdd4"/></svg>
<svg class="a" style="left:693px;top:1815px;" width="50" height="36" viewBox="0 0 50 36"><path d="M4 20 L36 6 L48 14 L16 30 Z" fill="#e8d28a"/><path d="M4 20 L16 30 V34 L4 24 Z" fill="#a88d46"/><path d="M16 30 L48 14 V18 L16 34 Z" fill="#c5a95e"/><path d="M18 16 L34 9" stroke="#9b7f3a" stroke-width="2"/></svg>
<svg class="a" style="left:791px;top:1812px;" width="48" height="48" viewBox="0 0 48 48"><defs><clipPath id="oc2"><circle cx="24" cy="24" r="20"/></clipPath></defs><circle cx="24" cy="24" r="21" fill="#111" stroke="#cfcfcf" stroke-width="2.4"/><g transform="rotate(8 24 24)" clip-path="url(#oc2)"><circle cx="24" cy="24" r="16" fill="#bdbdbd"/><circle cx="25.5" cy="13.5" r="9.8" fill="#111"/><circle cx="13.8" cy="30" r="9.8" fill="#111"/><circle cx="33.6" cy="31.6" r="9.8" fill="#111"/></g></svg>
<svg class="a" style="left:2450px;top:1830px;" width="26" height="16" viewBox="0 0 26 16"><path d="M2 14 L13 3 L24 14" fill="none" stroke="#fff" stroke-width="2.2"/></svg>
<svg class="a" style="left:2493px;top:1823px;" width="34" height="30" viewBox="0 0 34 30"><rect x="8" y="3" width="24" height="19" fill="none" stroke="#fff" stroke-width="2"/><path d="M20 22 V27 M13 28 H27" stroke="#fff" stroke-width="2"/><rect x="1" y="1" width="8" height="12" fill="#0c0f16" stroke="#fff" stroke-width="1.6"/></svg>
<svg class="a" style="left:2540px;top:1823px;" width="34" height="30" viewBox="0 0 34 30"><path d="M2 10 H7 L15 3 V27 L7 20 H2 Z" fill="none" stroke="#fff" stroke-width="2"/><path d="M19 10 Q22 15 19 20 M23 6 Q28 15 23 24 M27 2 Q34 15 27 28" fill="none" stroke="#fff" stroke-width="2"/></svg>
<div class="a t" style="left:2592px;top:1825.53px;font-size:23px;color:#fff;font-weight:400;letter-spacing:-2.42px;">ENG</div>
<div class="a t" style="left:2712.5px;top:1808.53px;font-size:23px;color:#fff;font-weight:400;letter-spacing:-0.57px;transform:translateX(-50%);">1:02 AM</div>
<div class="a t" style="left:2713.5px;top:1843.53px;font-size:23px;color:#fff;font-weight:400;letter-spacing:-0.46px;transform:translateX(-50%);">10/10/2024</div>
<svg class="a" style="left:2796px;top:1820px;" width="56" height="50" viewBox="0 0 56 50"><path d="M4 2 H34 V26 H14 L6 33 V26 H4 Z" fill="#fff"/><path d="M10 9 H28 M10 14 H28 M10 19 H24" stroke="#0c0f16" stroke-width="2"/><circle cx="35" cy="31" r="13" fill="#2a2a2a" stroke="#666" stroke-width="1.5"/><text x="35" y="38" font-family="Liberation Sans" font-size="19" font-weight="700" fill="#fff" text-anchor="middle">1</text></svg>
<div class="a" style="left:2870px;top:1800px;width:2px;height:73px;background:#5a5d66;"></div>
<svg class="a" style="left:442.5px;top:1161px;" width="32" height="32" viewBox="0 0 32 32"><path fill-rule="evenodd" d="M14.63 2.07 L17.37 2.07 L19.19 5.47 L21.19 6.30 L24.88 5.18 L26.82 7.12 L25.70 10.81 L26.53 12.81 L29.93 14.63 L29.93 17.37 L26.53 19.19 L25.70 21.19 L26.82 24.88 L24.88 26.82 L21.19 25.70 L19.19 26.53 L17.37 29.93 L14.63 29.93 L12.81 26.53 L10.81 25.70 L7.12 26.82 L5.18 24.88 L6.30 21.19 L5.47 19.19 L2.07 17.37 L2.07 14.63 L5.47 12.81 L6.30 10.81 L5.18 7.12 L7.12 5.18 L10.81 6.30 L12.81 5.47 Z M21.6 16 A5.6 5.6 0 1 0 10.4 16 A5.6 5.6 0 1 0 21.6 16 Z" fill="#ececee"/></svg>
<svg class="a" style="left:2792px;top:168px;" width="34" height="33" viewBox="0 0 34 33"><rect x="2" y="2" width="19.5" height="17" rx="2" fill="none" stroke="#e9eaec" stroke-width="2"/><rect x="2" y="2" width="19.5" height="4.5" fill="#e9eaec"/><rect x="12" y="14" width="20" height="17" rx="2" fill="#3b3e4b" stroke="#e9eaec" stroke-width="2"/><rect x="12" y="14" width="20" height="4.5" fill="#e9eaec"/></svg>
<svg class="a" style="left:2842px;top:174px;" width="20" height="20" viewBox="0 0 20 20"><path d="M2.5 2.5 L17.5 17.5 M17.5 2.5 L2.5 17.5" stroke="#f4f4f6" stroke-width="3.6"/></svg>
<div class="a" style="left:2140px;top:249px;width:66px;height:47.5px;background:#e42d22;border-radius:11px;"></div>
<svg class="a" style="left:2164px;top:261px;" width="22" height="24" viewBox="0 0 22 24"><path d="M2 1.5 L19 11.3 L2 21.5 Z" fill="#fff"/></svg>
<div class="a t" style="left:2216px;top:243.22px;font-size:59.4px;font-weight:700;color:#fff;transform:scaleX(0.6);transform-origin:0 0;">Studio</div>
<div class="a" style="left:2809.4px;top:257.3px;width:7.0px;height:7.0px;background:#ffffff;border-radius:50%;"></div>
<div class="a" style="left:2809.4px;top:269.2px;width:7.0px;height:7.0px;background:#ffffff;border-radius:50%;"></div>
<div class="a" style="left:2809.4px;top:280.9px;width:7.0px;height:7.0px;background:#ffffff;border-radius:50%;"></div>
<svg class="a" style="left:2410px;top:545px;" width="160" height="120" viewBox="0 0 160 120"><circle cx="87" cy="55" r="43" fill="#f2b63c"/><path d="M26 36 L38 27 L36 44 Z" fill="#e8604a"/><path d="M122 45 L134 40 L128 54 Z" fill="#e8604a"/><circle cx="132" cy="38" r="4.5" fill="#4f7fd0"/><path d="M45 16 L49 21 L45 26 L41 21 Z" fill="#f2b63c"/><rect x="60" y="21" width="24" height="18" rx="4" fill="#6a43c9"/><ellipse cx="101" cy="35" rx="12" ry="20" transform="rotate(18 101 35)" fill="#4a90e2"/><ellipse cx="101" cy="36" rx="8" ry="15" transform="rotate(18 101 36)" fill="#6a43c9"/><ellipse cx="96" cy="37" rx="6" ry="2.5" fill="#fff"/><ellipse cx="50" cy="72" rx="35" ry="34" fill="#5ccdb4"/><circle cx="43" cy="59" r="11" fill="#fff"/><ellipse cx="47" cy="59" rx="4.5" ry="8.5" transform="rotate(-15 47 59)" fill="#1a1a1a"/><path d="M40 77 Q48 74 54 72 Q52 79 44 80 Z" fill="#1a1a1a"/><path d="M78 48 Q92 42 108 50 Q128 56 128 70 Q124 86 100 82 Q84 76 78 48 Z" fill="#ffffff"/><ellipse cx="68" cy="68" rx="4" ry="10" fill="#ffffff"/><path d="M74 95 Q78 66 92 68 Q102 72 100 98 Z" fill="#5aa0e8"/><rect x="80" y="86" width="10" height="12" fill="#3a46c0"/><circle cx="84" cy="79" r="3" fill="#fff"/><path d="M54 92 Q62 82 72 88 Q74 100 66 104 Q58 104 54 92 Z" fill="#e27cc8"/><path d="M98 84 Q110 74 118 86 Q118 100 106 100 Q98 96 98 84 Z" fill="#e27cc8"/></svg>
<div class="a t" style="left:2206.5px;top:1611.79px;font-size:47.5px;color:rgba(255,255,255,0.5);font-weight:400;letter-spacing:0.4px;-webkit-text-stroke:0;">Activate Windows</div>
<div class="a t" style="left:2206px;top:1677.23px;font-size:32.8px;color:rgba(255,255,255,0.5);font-weight:400;letter-spacing:1.05px;-webkit-text-stroke:0;">Go to Settings to activate Windows.</div>
<div class="a" style="left:572px;top:787px;width:382px;height:904px;background:#1c1e26;border:1px solid #24262e;"></div>
<div class="a" style="left:577px;top:1505px;width:372px;height:53px;background:#2e4ab4;border-radius:8px;"></div>
<div class="a" style="left:584px;top:1563px;width:358px;height:2px;background:#363946;"></div>
<div class="a" style="left:584px;top:1628px;width:358px;height:2px;background:#363946;"></div>
<div class="a t" style="left:641px;top:807.24px;font-size:25px;color:#eceef1;font-weight:400;letter-spacing:0.87px;">Audio Input Capture</div>
<div class="a t" style="left:641px;top:862.09px;font-size:25px;color:#eceef1;font-weight:400;letter-spacing:0.98px;">Audio Output Capture</div>
<div class="a t" style="left:641px;top:916.94px;font-size:25px;color:#eceef1;font-weight:400;letter-spacing:0.67px;">Browser</div>
<div class="a t" style="left:641px;top:971.79px;font-size:25px;color:#eceef1;font-weight:400;letter-spacing:0.25px;">Color Source</div>
<div class="a t" style="left:641px;top:1026.64px;font-size:25px;color:#eceef1;font-weight:400;letter-spacing:0.4px;">Display Capture</div>
<div class="a t" style="left:641px;top:1081.49px;font-size:25px;color:#eceef1;font-weight:400;letter-spacing:0.33px;">Game Capture</div>
<div class="a t" style="left:641px;top:1136.34px;font-size:25px;color:#eceef1;font-weight:400;letter-spacing:0.55px;">Image</div>
<div class="a t" style="left:641px;top:1191.19px;font-size:25px;color:#eceef1;font-weight:400;letter-spacing:0.13px;">Image Slide Show</div>
<div class="a t" style="left:641px;top:1246.04px;font-size:25px;color:#eceef1;font-weight:400;letter-spacing:0.34px;">Media Source</div>
<div class="a t" style="left:641px;top:1300.89px;font-size:25px;color:#eceef1;font-weight:400;letter-spacing:-0.77px;">Scene</div>
<div class="a t" style="left:641px;top:1355.74px;font-size:25px;color:#eceef1;font-weight:400;letter-spacing:-0.09px;">Text (GDI+)</div>
<div class="a t" style="left:641px;top:1410.59px;font-size:25px;color:#eceef1;font-weight:400;letter-spacing:0.31px;">Video Capture Device</div>
<div class="a t" style="left:641px;top:1465.44px;font-size:25px;color:#eceef1;font-weight:400;letter-spacing:-0.1px;">VLC Video Source</div>
<div class="a t" style="left:641px;top:1520.29px;font-size:25px;color:#eceef1;font-weight:400;letter-spacing:0.78px;">Window Capture</div>
<div class="a t" style="left:641px;top:1583.84px;font-size:25px;color:#eceef1;font-weight:400;letter-spacing:1.13px;">Group</div>
<div class="a t" style="left:641px;top:1649.84px;font-size:25px;color:#eceef1;font-weight:400;letter-spacing:0.38px;">Deprecated</div>
<svg class="a" style="left:925px;top:1649.5px;" width="14" height="24" viewBox="0 0 14 24"><path d="M1 1 L13 12 L1 23 Z" fill="#f2f2f4"/></svg>
<svg class="a" style="left:585px;top:800px;" width="34" height="40" viewBox="0 0 34 40"><rect x="11.2" y="5" width="9.8" height="20" rx="4.9" fill="#f4f4f6"/><path d="M7.8 12.6 V18 Q7.8 28 16 28 Q24.2 28 24.2 18 V12.6" fill="none" stroke="#f4f4f6" stroke-width="2.4"/><rect x="13" y="27" width="6" height="5" fill="#f4f4f6"/><rect x="6.7" y="31" width="18.3" height="4" rx="1" fill="#f4f4f6"/></svg>
<svg class="a" style="left:584px;top:858px;" width="36" height="32" viewBox="0 0 36 32"><path d="M2 9.5 Q2 8.5 3 8.5 H8 L15.7 1.7 V29.8 L8 23 H3 Q2 23 2 22 Z" fill="#f4f4f6"/><path d="M20.5 9 Q24.5 16 20.5 23" fill="none" stroke="#f4f4f6" stroke-width="3.4" stroke-linecap="round"/><path d="M27.5 5 Q33.5 16 27.5 27" fill="none" stroke="#f4f4f6" stroke-width="3.4" stroke-linecap="round"/></svg>
<svg class="a" style="left:584px;top:911px;" width="36" height="36" viewBox="0 0 36 36"><circle cx="17.7" cy="17.5" r="16" fill="#f4f4f6"/><path d="M9.5 8 Q5.5 14 6.8 20.5 Q8.5 24.5 12 26 Q13 21.5 13.8 18.5 Q11.2 15.5 13.2 11.2 Q12 8.8 9.5 8 Z" fill="#1c1e26"/><path d="M17.5 9.5 Q19 7.5 21 8.5 L22.5 7.5 Q26.5 8.5 29.2 12.5 Q29.5 14.5 27 15.2 Q25.5 16 25.2 18.5 Q24 22 22.5 25 Q21.5 21.5 20.2 19.2 Q17.8 17.2 19.2 14.2 Q17 12.5 17.5 9.5 Z" fill="#1c1e26"/></svg>
<svg class="a" style="left:584px;top:966px;" width="36" height="36" viewBox="0 0 36 36"><path d="M31.2 5.5 L20.5 16.3" stroke="#f4f4f6" stroke-width="6.5" stroke-linecap="round"/><path d="M3.6 31.3 V23.5 Q3.6 15.3 11.8 15.3 Q20 15.3 20 23.5 Q20 31.3 12 31.3 Z" fill="#f4f4f6"/></svg>
<svg class="a" style="left:584px;top:1022px;" width="36" height="36" viewBox="0 0 36 36"><rect x="4.2" y="4.7" width="27" height="21.5" rx="5" fill="none" stroke="#f4f4f6" stroke-width="4.3"/><rect x="10.3" y="30.3" width="15" height="2.2" rx="1" fill="#f4f4f6"/></svg>
<svg class="a" style="left:584px;top:1080px;" width="36" height="24" viewBox="0 0 36 24"><path d="M9.5 4 H24.5 Q33.5 4 33.5 12 Q33.5 19.3 27.5 19.3 Q24.5 19.3 22.5 16 H12.5 Q10.5 19.3 7.5 19.3 Q2 19.3 2 12 Q2 4 9.5 4 Z" fill="#f4f4f6"/><path d="M8.2 8.5 L9.5 11 L12 12 L9.5 13 L8.2 15.5 L7 13 L4.5 12 L7 11 Z" fill="#1c1e26"/><circle cx="23.8" cy="9" r="1.8" fill="#1c1e26"/><circle cx="27.5" cy="13.2" r="1.8" fill="#1c1e26"/></svg>
<svg class="a" style="left:584px;top:1130px;" width="36" height="36" viewBox="0 0 36 36"><rect x="6.2" y="6.2" width="23" height="23" rx="5" fill="none" stroke="#f4f4f6" stroke-width="4"/><rect x="11" y="11.5" width="4.2" height="4" fill="#f4f4f6"/><path d="M9.5 24.5 L15.5 19.5 L18.5 21.5 L23 17.5 L26.5 21 V25.5 H9.5 Z" fill="#f4f4f6"/></svg>
<svg class="a" style="left:584px;top:1186px;" width="36" height="36" viewBox="0 0 36 36"><rect x="2.2" y="4.8" width="29.2" height="3" fill="#f4f4f6"/><rect x="4" y="5" width="25.6" height="19" fill="#f4f4f6"/><path d="M16.8 24 V28 M16.8 27.5 L12.5 32 M16.8 27.5 L21.2 32" stroke="#f4f4f6" stroke-width="1.8"/><path d="M16.5 10 A5 5 0 1 0 21.5 15 H16.5 Z" fill="#1c1e26"/><path d="M18 9 A5 5 0 0 1 22.5 13.5 H18 Z" fill="#1c1e26"/></svg>
<svg class="a" style="left:584px;top:1238px;" width="36" height="36" viewBox="0 0 36 36"><path d="M8 8 Q8 4.5 11 6 L30 16.5 Q32 18 30 19.5 L11 30 Q8 31.5 8 28 Z" fill="#f4f4f6"/></svg>
<svg class="a" style="left:584px;top:1293px;" width="36" height="36" viewBox="0 0 36 36"><rect x="5.6" y="7" width="4.7" height="4.5" fill="#f4f4f6"/><rect x="13.7" y="7" width="18.3" height="4.5" fill="#f4f4f6"/><rect x="5.6" y="17" width="4.7" height="4.5" fill="#f4f4f6"/><rect x="13.7" y="17" width="18.3" height="4.5" fill="#f4f4f6"/><rect x="5.6" y="26.7" width="4.7" height="4.5" fill="#f4f4f6"/><rect x="13.7" y="26.7" width="18.3" height="4.5" fill="#f4f4f6"/></svg>
<div class="a t" style="left:585.5px;top:1355.29px;font-size:26px;color:#f4f4f6;font-weight:700;letter-spacing:-1.5px;">ab</div>
<svg class="a" style="left:584px;top:1406px;" width="36" height="32" viewBox="0 0 36 32"><path d="M4 9 Q4 8 5 8 H11.6 L12 4 H23.8 L24 8 H30.6 Q31.6 8 31.6 9 V27.5 H4 Z" fill="#f4f4f6"/><circle cx="17.6" cy="17.6" r="6.2" fill="none" stroke="#1c1e26" stroke-width="3"/></svg>
<svg class="a" style="left:584px;top:1459px;" width="36" height="36" viewBox="0 0 36 36"><path d="M6 7 Q6 3.5 9 5 L30 16 Q32 17.5 30 19 L9 31 Q6 32.5 6 29 Z" fill="#f4f4f6"/></svg>
<svg class="a" style="left:584px;top:1514px;" width="36" height="36" viewBox="0 0 36 36"><rect x="4.2" y="4.4" width="27" height="26.8" rx="3" fill="none" stroke="#f4f4f6" stroke-width="4"/><rect x="4.2" y="4.4" width="27" height="10" fill="#f4f4f6"/><path d="M24.5 6.5 L28.5 10.5 M28.5 6.5 L24.5 10.5" stroke="#2e4ab4" stroke-width="1.4"/></svg>
<svg class="a" style="left:584px;top:1580px;" width="36" height="32" viewBox="0 0 36 32"><path d="M5.5 25 V7 Q5.5 5 7.5 5 H14 L17 8.5 H24.5 Q26.5 8.5 26.5 10.5 V13" fill="none" stroke="#f4f4f6" stroke-width="3.6" stroke-linejoin="round"/><path d="M5.5 25 Q5.5 27.5 8 27.5 H26 Q28 27.5 29 25 L32.5 16 Q33 14 31 14 H13 Q11 14 10.3 16 L6.5 25" fill="none" stroke="#f4f4f6" stroke-width="3.6" stroke-linejoin="round"/></svg>
</body></html>
